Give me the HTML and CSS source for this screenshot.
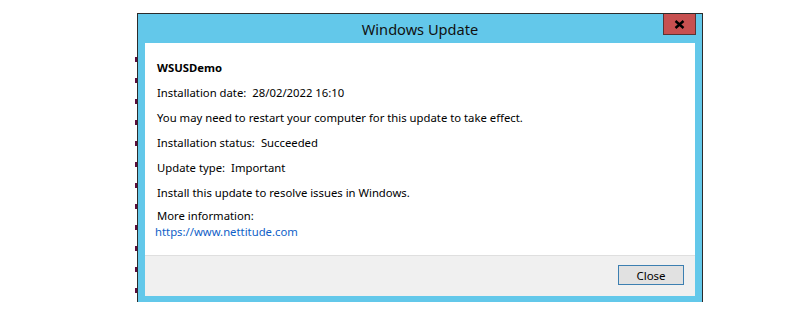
FILE: index.html
```html
<!DOCTYPE html>
<html lang="en">

<head>
  <meta charset="UTF-8">
  <meta name="viewport" content="width=device-width, initial-scale=1.0">
  <title>Windows Update</title>
  <link rel="stylesheet" href="styles.css">
</head>

<body>
  <div class="desktop">
    <div class="edge"></div>
    <section class="window">
      <header class="titlebar">
        <h1 class="title">Windows Update</h1>
        <button class="close-x" type="button" aria-label="Close">
          <svg width="11" height="9" viewBox="0 0 11 9">
            <path d="M1.5 1 L9.5 8 M9.5 1 L1.5 8" stroke="#000" stroke-width="2.4" fill="none"/>
          </svg>
        </button>
      </header>
      <div class="client">
        <article class="details">
          <p class="name">WSUSDemo</p>
          <p>Installation date:<span class="value">28/02/2022 16:10</span></p>
          <p>You may need to restart your computer for this update to take effect.</p>
          <p>Installation status:<span class="value">Succeeded</span></p>
          <p>Update type:<span class="value">Important</span></p>
          <p>Install this update to resolve issues in Windows.</p>
          <p class="more">More information:</p>
          <a class="link" href="#">https://www.nettitude.com</a>
        </article>
        <footer class="actions">
          <button class="btn" type="button">Close</button>
        </footer>
      </div>
    </section>
  </div>
</body>

</html>
```

FILE: styles.css
```css
html {
  box-sizing: border-box;
  font-family: 'Noto Sans', 'Open Sans', sans-serif;
  font-size: 11.3px;
}

*,
*:after,
*:before {
  box-sizing: inherit;
}

body {
  margin: 0;
  background-color: #fff;
}

.desktop {
  display: flex;
  padding-top: 13px;
  padding-left: 135px;
}

.edge {
  width: 2px;
  margin-top: 44px;
  height: 245px;
  background: repeating-linear-gradient(to bottom, #5c0d3c 0 5px, transparent 5px 21px);
}

.window {
  width: 566px;
  height: 289px;
  display: flex;
  flex-direction: column;
  background-color: #63c8ea;
  border: 1px solid #2b2b2b;
  border-bottom: none;
}

.titlebar {
  height: 29px;
  display: flex;
  justify-content: center;
  align-items: center;
  position: relative;
}

.title {
  margin: 0;
  font-weight: normal;
  font-size: 14.6px;
  color: #111;
}

.close-x {
  position: absolute;
  top: 0;
  right: 6px;
  width: 33px;
  height: 21px;
  padding: 0;
  border: 1px solid #5a3434;
  border-top: none;
  background-color: #c75050;
  display: flex;
  justify-content: center;
  align-items: center;
}

.client {
  flex: 1;
  margin: 0 7px 6px 7px;
  display: flex;
  flex-direction: column;
  background-color: #fff;
}

.details {
  flex: 1;
  padding: 12px 12px 0 12px;
  color: #000;
}

.details p {
  margin: 0;
  line-height: 25px;
}

.details .name {
  font-weight: bold;
}

.value {
  margin-left: 6px;
}

.details .more {
  margin-top: 3px;
  line-height: 16px;
}

.link {
  display: block;
  margin-left: -2px;
  line-height: 16px;
  color: #0f5fc8;
  text-decoration: none;
}

.actions {
  height: 41px;
  display: flex;
  justify-content: flex-end;
  align-items: flex-start;
  padding: 9px 11px 0 0;
  border-top: 1px solid #dfdfdf;
  background-color: #f0f0f0;
}

.btn {
  width: 66px;
  height: 20px;
  padding: 0;
  font-family: inherit;
  font-size: 11.5px;
  color: #000;
  border: 1px solid #3c7fb1;
  background-color: #e1e1e1;
}
```
